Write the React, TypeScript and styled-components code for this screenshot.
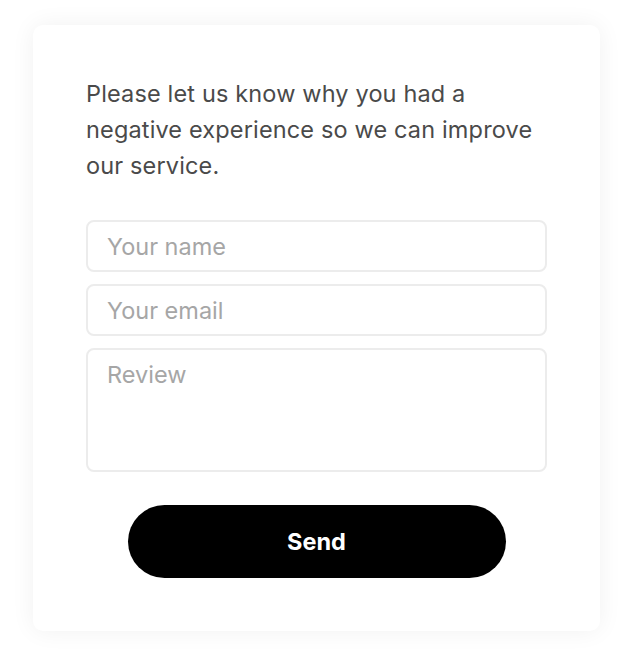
import React from 'react'
import styled, { createGlobalStyle } from 'styled-components'

const GlobalStyle = createGlobalStyle`
* { box-sizing: border-box; }
body {
  margin: 0;
  background: #ffffff;
  font-family: Inter, "Noto Sans", sans-serif;
}
`

const App = () => {
  return (
    <Page>
      <GlobalStyle />
      <Card>
        <Intro>
          Please let us know why you had a negative experience so we can improve our service.
        </Intro>
        <Form onSubmit={(e) => e.preventDefault()}>
          <Field type='text' placeholder='Your name' />
          <Field type='email' placeholder='Your email' />
          <Area placeholder='Review' />
          <ButtonRow>
            <SendButton type='submit'>Send</SendButton>
          </ButtonRow>
        </Form>
      </Card>
    </Page>
  )
}

const Page = styled.div`
padding: 25px 34px 40px 33px;
`

const Card = styled.div`
width: 567px;
height: 606px;
background: #fff;
border-radius: 10px;
box-shadow: 0 0 24px rgba(0, 0, 0, 0.06);
padding: 51px 53px 53px 53px;
`

const Intro = styled.p`
margin: 0;
font-size: 23.5px;
line-height: 36px;
letter-spacing: 0.15px;
color: #4a4a4a;
`

const Form = styled.form`
display: flex;
flex-direction: column;
gap: 12px;
margin-top: 36px;
`

const inputStyle = `
width: 100%;
border: 2px solid #ececec;
border-radius: 8px;
background: #fff;
font-family: Inter, "Noto Sans", sans-serif;
font-size: 23.5px;
color: #333;
padding: 0 19px;
outline: none;
&::placeholder { color: #a6a6a6; }
`

const Field = styled.input`
${inputStyle}
height: 52px;
`

const Area = styled.textarea`
${inputStyle}
height: 124px;
padding-top: 11px;
line-height: 28px;
resize: none;
`

const ButtonRow = styled.div`
display: flex;
justify-content: center;
margin-top: 21px;
`

const SendButton = styled.button`
width: 378px;
height: 73px;
border: none;
border-radius: 37px;
background: #000;
color: #fff;
font-family: Inter, "Noto Sans", sans-serif;
font-size: 23.5px;
font-weight: 700;
cursor: pointer;
`

export default App
